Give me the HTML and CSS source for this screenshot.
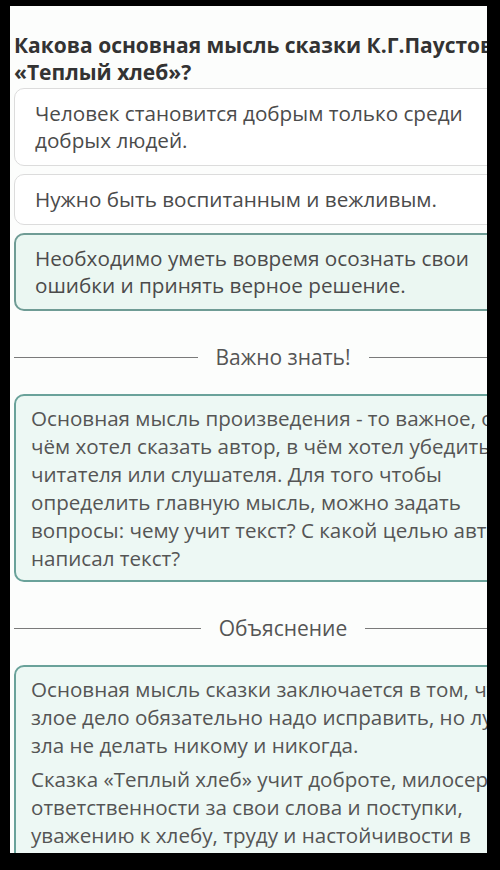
FILE: index.html
```html
<!DOCTYPE html>
<html lang="ru">
<head>
  <meta charset="UTF-8" />
  <title>Теплый хлеб</title>
  <link rel="stylesheet" href="styles.css">
</head>
<body>

<div class="screen">
  <div class="page">
    <h2 class="question">Какова основная мысль сказки К.Г.Паустовского<br>«Теплый хлеб»?</h2>

    <div class="options">
      <div class="option">Человек становится добрым только среди<br>добрых людей.</div>
      <div class="option">Нужно быть воспитанным и вежливым.</div>
      <div class="option selected">Необходимо уметь вовремя осознать свои<br>ошибки и принять верное решение.</div>
    </div>

    <div class="divider"><span>Важно знать!</span></div>
    <div class="note">
      <p>Основная мысль произведения - то важное, о<br>чём хотел сказать автор, в чём хотел убедить<br>читателя или слушателя. Для того чтобы<br>определить главную мысль, можно задать<br>вопросы: чему учит текст? С какой целью автор<br>написал текст?</p>
    </div>

    <div class="divider"><span>Объяснение</span></div>
    <div class="note">
      <p>Основная мысль сказки заключается в том, что<br>злое дело обязательно надо исправить, но лучше<br>зла не делать никому и никогда.</p>
      <p>Сказка «Теплый хлеб» учит доброте, милосердию,<br>ответственности за свои слова и поступки,<br>уважению к хлебу, труду и настойчивости в<br>достижении цели.</p>
    </div>
  </div>
</div>

</body>
</html>
```

FILE: styles.css
```css
body {
  margin: 0;
  background: #000;
  font-family: "Open Sans", "Noto Sans", sans-serif;
}

/* снимок экрана телефона в чёрной рамке */
.screen {
  margin: 6px 0 0 10px;
  width: 477px;
  height: 847px;
  background: #fcfdfc;
  overflow: hidden;
}

.page {
  width: 538px;
  padding: 26px 0 0 4px;
}

.question {
  margin: 0 0 2px;
  font-size: 21px;
  line-height: 27px;
  font-weight: 700;
  color: #333;
  white-space: nowrap;
}

.options {
  display: flex;
  flex-direction: column;
  gap: 8px;
}

.option {
  border: 1px solid #dcdcdc;
  border-radius: 10px;
  padding: 11px 20px;
  font-size: 20.7px;
  line-height: 27px;
  color: #4b4b4b;
  background: #fff;
}

.option.selected {
  border: 2px solid #6f9c95;
  padding: 10px 19px;
  background: #ebf7f2;
}

.divider {
  display: flex;
  align-items: center;
  margin: 33px 0 23px;
  font-size: 21px;
  line-height: 27px;
  color: #555;
}

.divider::before,
.divider::after {
  content: "";
  flex: 1;
  border-top: 1px solid #7a7a7a;
}

.divider span {
  padding: 0 18px;
}

.note {
  border: 2px solid #6aa29a;
  border-radius: 10px;
  padding: 8px 15px 8px;
  background: #edf8f4;
  color: #555;
  font-size: 20.6px;
  line-height: 28px;
  white-space: nowrap;
}

.note p {
  margin: 0;
}

.note p + p {
  margin-top: 6px;
}
```
